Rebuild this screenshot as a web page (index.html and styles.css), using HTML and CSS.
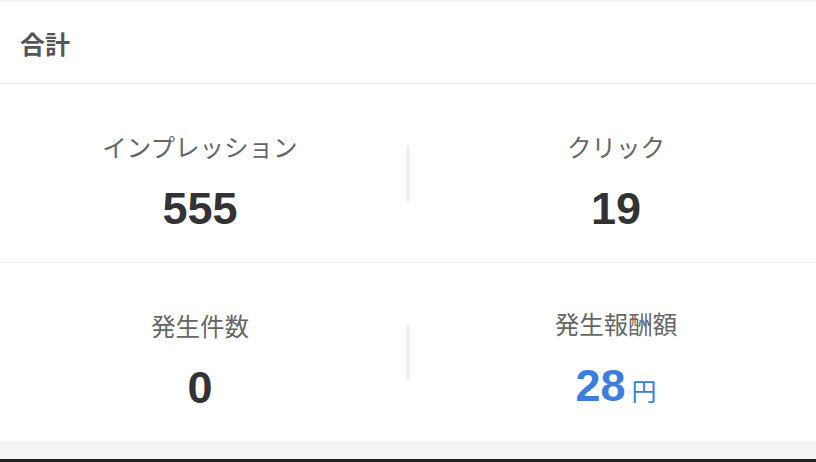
FILE: index.html
```html
<!DOCTYPE html>
<html lang="ja">
<head>
<meta charset="UTF-8">
<meta name="viewport" content="width=device-width, initial-scale=1.0">
<title>合計</title>
<link rel="stylesheet" href="styles.css">
</head>
<body>
<div class="summary-card">
  <div class="summary-header">合計</div>
  <div class="summary-row">
    <div class="stat">
      <div class="stat-label">インプレッション</div>
      <div class="stat-value">555</div>
    </div>
    <div class="stat-divider"></div>
    <div class="stat">
      <div class="stat-label">クリック</div>
      <div class="stat-value">19</div>
    </div>
  </div>
  <div class="summary-row last">
    <div class="stat">
      <div class="stat-label">発生件数</div>
      <div class="stat-value">0</div>
    </div>
    <div class="stat-divider"></div>
    <div class="stat">
      <div class="stat-label">発生報酬額</div>
      <div class="stat-value money">28<span class="unit">円</span></div>
    </div>
  </div>
</div>
<div class="page-bottom"></div>
</body>
</html>
```

FILE: styles.css
```css
html, body { margin: 0; height: 100%; }
body { background-color: #f4f4f4; display: flex; flex-direction: column; padding-top: 2px; box-sizing: border-box; font-family: "Noto Sans CJK JP", "Liberation Sans", sans-serif; }
.summary-card { background-color: #fff; }
.summary-header { height: 81px; display: flex; align-items: center; padding-left: 20px; font-size: 25px; font-weight: bold; color: #555; border-bottom: 1px solid #efefef; box-sizing: content-box; }
.summary-row { display: grid; grid-template-columns: 1fr 16px 1fr; align-items: center; height: 178px; border-bottom: 1px solid #efefef; }
.summary-row.last { border-bottom: none; height: 178px; }
.stat { display: flex; flex-direction: column; align-items: center; padding-top: 18px; }
.stat-label { font-size: 24.5px; line-height: 30px; color: #666; }
.stat-value { margin-top: 24px; font-family: "Liberation Sans", Arial, sans-serif; font-weight: bold; font-size: 45px; line-height: 46px; color: #333; }
.stat-value.money { color: #3c7ddd; display: flex; align-items: baseline; }
.unit { font-family: "Noto Sans CJK JP", sans-serif; font-weight: normal; font-size: 25px; margin-left: 6px; }
.stat-divider { width: 4px; height: 55px; background-color: #eef0f3; justify-self: center; }
.page-bottom { margin-top: auto; height: 3px; background-color: #222; }
```
